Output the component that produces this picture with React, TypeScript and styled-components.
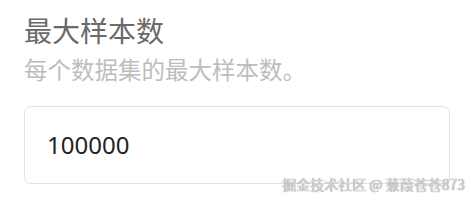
import React from "react";
import styled, { createGlobalStyle } from "styled-components";

const Global = createGlobalStyle`
  html, body { margin: 0; padding: 0; background: #fff; }
  body { font-family: "Noto Sans CJK SC", "Noto Sans", sans-serif; }
`;

const Page = styled.div`
  position: relative;
  width: 471px;
  height: 201px;
  box-sizing: border-box;
  padding: 12px 21px 0 24px;
  display: flex;
  flex-direction: column;
`;

const Title = styled.div`
  font-size: 28px;
  line-height: 36px;
  color: #6a6a6a;
`;

const Hint = styled.div`
  margin-top: 6px;
  font-size: 23.5px;
  line-height: 30px;
  color: #bdbdbd;
`;

const Field = styled.div`
  margin-top: 22px;
  height: 78px;
  box-sizing: border-box;
  border: 1.5px solid #e2e2e2;
  border-radius: 7px;
  display: flex;
  align-items: center;
  padding: 0 22px 2px;
  font-family: "Noto Sans", "Noto Sans CJK SC", sans-serif;
  font-size: 24px;
  color: #222;
`;

const Watermark = styled.div`
  position: absolute;
  right: 6px;
  bottom: 8px;
  font-size: 14px;
  line-height: 18px;
  color: #d8d8d8;
  font-family: "Noto Sans CJK SC", sans-serif;
  text-shadow: 0 0 1px #666;
`;

export default function App() {
  return (
    <>
      <Global />
      <Page>
        <Title>最大样本数</Title>
        <Hint>每个数据集的最大样本数。</Hint>
        <Field>100000</Field>
        <Watermark>掘金技术社区 @ 蒹葭苍苍873</Watermark>
      </Page>
    </>
  );
}
